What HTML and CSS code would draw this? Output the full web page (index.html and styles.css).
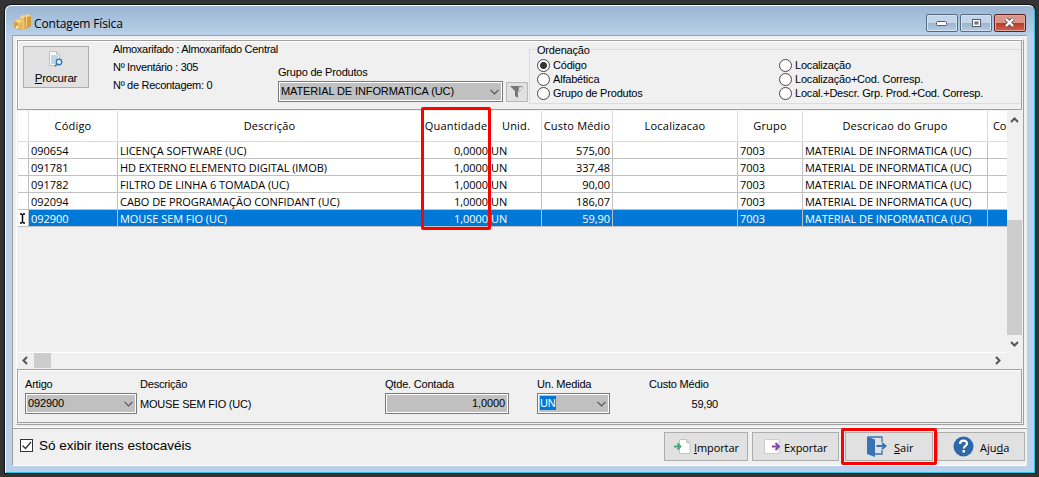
FILE: index.html
```html
<!DOCTYPE html>
<html lang="pt-BR">
<head>
    <meta charset="utf-8">
    <title>Contagem Física</title>
    <link rel="stylesheet" href="styles.css">
</head>
<body>
    <div class="window">
        <!-- title bar -->
        <div class="titlebar">
            <svg class="app-icon" width="17" height="17" viewBox="0 0 17 17">
                <path d="M0 7l4-2 5 2v8l-5 1-4-3z" fill="#d9a23c"/>
                <path d="M5 4l4-3 4 1v12l-5 2-3-2z" fill="#e5b452"/>
                <path d="M10 3l4-3 3 2v10l-5 3z" fill="#d39c3a"/>
                <path d="M0 7l4-2 5 2-4 2zM5 4l4-3 3 1-4 3zM10 2l4-2 3 2-4 1z" fill="#f6d78c"/>
                <path d="M5 8v7M9 5v10M12.500 3v10" stroke="#f3d08a" fill="none"/>
                <path d="M3 12v3M2 13h2" stroke="#fff" fill="none"/>
            </svg>
            <span class="title">Contagem Física</span>
            <div class="controls">
                <div class="control"><svg width="12" height="6"><rect x=".5" y="1.500" width="10" height="4" rx="1" fill="#fff" stroke="#555b6e"/></svg></div>
                <div class="control"><svg width="11" height="10"><rect x="1.500" y="1.500" width="8" height="7" fill="#fff" stroke="#555b6e"/><rect x="4" y="4" width="3" height="2" fill="#8fa9c6" stroke="#555b6e"/></svg></div>
                <div class="control close"><svg width="12" height="10"><path d="M2 1l7 7M9 1L2 8" stroke="#555b6e" stroke-width="4"/><path d="M2 1l7 7M9 1L2 8" stroke="#fff" stroke-width="2.2"/></svg></div>
            </div>
        </div>

        <div class="client">
            <div class="main">
                <!-- search panel -->
                <div class="search-panel">
                    <button class="btn-search">
                        <svg width="16" height="17" viewBox="0 0 16 17">
                            <path d="M1.5.5h7l3 3v11h-10z" fill="#fafafa" stroke="#b9c0c6"/>
                            <path d="M3 4h5v1h2v8H3z" fill="#bcd5ea"/>
                            <path d="M8.5 1v3h3" fill="none" stroke="#b9c0c6"/>
                            <circle cx="11" cy="11" r="2.7" fill="#e8f2fa" stroke="#3b78b8" stroke-width="1.4"/>
                            <path d="M9 13l-2.300 2.300" stroke="#3b78b8" stroke-width="1.600"/>
                        </svg>
                        <span><u>P</u>rocurar</span>
                    </button>
                    <div class="info">
                        <div>Almoxarifado : Almoxarifado Central</div>
                        <div>Nº Inventário : 305</div>
                        <div>Nº de Recontagem: 0</div>
                    </div>
                    <div class="group-field">
                        <label>Grupo de Produtos</label>
                        <div class="combo combo-group"><span>MATERIAL DE INFORMATICA (UC)</span><svg width="9" height="6"><path d="M.5.8l4 4 4-4" fill="none" stroke="#555" stroke-width="1.2"/></svg></div>
                    </div>
                    <div class="filter">
                        <svg width="16" height="15" viewBox="0 0 16 15"><path d="M1 1h12L9 6v7l-3-2V6z" fill="#777"/><path d="M10 2h4l-4 5z" fill="#fff" stroke="#999" stroke-width=".7"/></svg>
                    </div>
                    <div class="order">
                        <div class="legend">Ordenação</div>
                        <div class="radios">
                            <div class="radio checked"><i></i>Código</div>
                            <div class="radio"><i></i>Alfabética</div>
                            <div class="radio"><i></i>Grupo de Produtos</div>
                        </div>
                        <div class="radios">
                            <div class="radio"><i></i>Localização</div>
                            <div class="radio"><i></i>Localização+Cod. Corresp.</div>
                            <div class="radio"><i></i>Local.+Descr. Grp. Prod.+Cod. Corresp.</div>
                        </div>
                    </div>
                </div>

                <!-- items grid -->
                <div class="grid-area">
                    <div class="grid">
                        <div class="row head">
                            <div></div><div>Código</div><div>Descrição</div><div>Quantidade</div><div>Unid.</div><div>Custo Médio</div><div>Localizacao</div><div>Grupo</div><div>Descricao do Grupo</div><div class="cut">Co</div>
                        </div>
                        <div class="row">
                            <div></div><div>090654</div><div>LICENÇA SOFTWARE (UC)</div><div class="num">0,0000</div><div class="unit">UN</div><div class="num">575,00</div><div></div><div>7003</div><div>MATERIAL DE INFORMATICA (UC)</div><div></div>
                        </div>
                        <div class="row">
                            <div></div><div>091781</div><div>HD EXTERNO ELEMENTO DIGITAL (IMOB)</div><div class="num">1,0000</div><div class="unit">UN</div><div class="num">337,48</div><div></div><div>7003</div><div>MATERIAL DE INFORMATICA (UC)</div><div></div>
                        </div>
                        <div class="row">
                            <div></div><div>091782</div><div>FILTRO DE LINHA 6 TOMADA (UC)</div><div class="num">1,0000</div><div class="unit">UN</div><div class="num">90,00</div><div></div><div>7003</div><div>MATERIAL DE INFORMATICA (UC)</div><div></div>
                        </div>
                        <div class="row">
                            <div></div><div>092094</div><div>CABO DE PROGRAMAÇÃO CONFIDANT (UC)</div><div class="num">1,0000</div><div class="unit">UN</div><div class="num">186,07</div><div></div><div>7003</div><div>MATERIAL DE INFORMATICA (UC)</div><div></div>
                        </div>
                        <div class="row selected">
                            <div class="cursor"><svg width="7" height="11"><path d="M1 1h2M4 1h2M3.500 1v9M1 10h2M4 10h2" fill="none" stroke="#000" stroke-width="1.500"/></svg></div><div>092900</div><div>MOUSE SEM FIO (UC)</div><div class="num">1,0000</div><div class="unit">UN</div><div class="num">59,90</div><div></div><div>7003</div><div>MATERIAL DE INFORMATICA (UC)</div><div></div>
                        </div>
                    </div>
                    <div class="vscroll">
                        <svg width="9" height="6"><path d="M1 5l3.500-3.500L8 5" fill="none" stroke="#555" stroke-width="2"/></svg>
                        <div class="vthumb"></div>
                        <svg width="9" height="6"><path d="M1 1l3.500 3.500L8 1" fill="none" stroke="#555" stroke-width="2"/></svg>
                    </div>
                </div>
                <div class="hscroll">
                    <svg width="6" height="9"><path d="M5 1L1.500 4.500 5 8" fill="none" stroke="#555" stroke-width="2"/></svg>
                    <div class="hthumb"></div>
                    <svg width="6" height="9"><path d="M1 1l3.500 3.500L1 8" fill="none" stroke="#555" stroke-width="2"/></svg>
                </div>

                <!-- selected item -->
                <div class="detail">
                    <div class="field artigo">
                        <label>Artigo</label>
                        <div class="combo"><span>092900</span><svg width="9" height="6"><path d="M.5.8l4 4 4-4" fill="none" stroke="#555" stroke-width="1.2"/></svg></div>
                    </div>
                    <div class="field descricao">
                        <label>Descrição</label>
                        <div class="value">MOUSE SEM FIO (UC)</div>
                    </div>
                    <div class="field qtde">
                        <label>Qtde. Contada</label>
                        <div class="combo"><span class="right">1,0000</span></div>
                    </div>
                    <div class="field medida">
                        <label>Un. Medida</label>
                        <div class="combo"><span class="marked">UN</span><svg width="9" height="6"><path d="M.5.8l4 4 4-4" fill="none" stroke="#555" stroke-width="1.2"/></svg></div>
                    </div>
                    <div class="field custo">
                        <label>Custo Médio</label>
                        <div class="value">59,90</div>
                    </div>
                </div>
            </div>

            <!-- bottom bar -->
            <div class="bottom">
                <div class="check"><svg width="11" height="11"><path d="M1.500 5.500l3 3 5.500-6.500" fill="none" stroke="#333" stroke-width="1.300"/></svg></div>
                <span class="check-label">Só exibir itens estocavéis</span>
                <button class="btn importar">
                    <svg width="17" height="15" viewBox="0 0 17 15"><path d="M5.500.5h7l3.500 3.500v10.500H5.500z" fill="#fff" stroke="#c4c4c4"/><path d="M12.500.5V4H16z" fill="#ddd" stroke="#bbb" stroke-width=".7"/><path d="M0 7.500h5M3.500 4.500l3 3-3 3" fill="none" stroke="#47a67c" stroke-width="1.800"/></svg>
                    <span><u>I</u>mportar</span>
                </button>
                <button class="btn exportar">
                    <svg width="17" height="15" viewBox="0 0 17 15"><path d="M.5.5H15v14H.5z" fill="#fff" stroke="#ccc"/><path d="M8 7.500h6M11.500 4l3.500 3.500-3.500 3.500" fill="none" stroke="#8347a8" stroke-width="2"/></svg>
                    <span>Exportar</span>
                </button>
                <button class="btn sair">
                    <svg width="20" height="22" viewBox="0 0 20 22"><path d="M1 1h14v5M15 14v4H8" fill="none" stroke="#3873b3" stroke-width="1.300"/><path d="M0 .5l8 3V21l-8-3z" fill="#3873b3"/><path d="M9.500 10h8M15 7l3.500 3-3.500 3" fill="none" stroke="#3873b3" stroke-width="2"/></svg>
                    <span><u>S</u>air</span>
                </button>
                <button class="btn ajuda">
                    <svg width="21" height="21" viewBox="0 0 21 21"><circle cx="10.500" cy="10.500" r="10" fill="#2f68a8"/><path d="M7 8c0-4.500 7-4.500 7-.5 0 2.500-3.200 2.500-3.200 5" fill="none" stroke="#fff" stroke-width="2.200"/><rect x="9.500" y="14" width="2.500" height="2.500" fill="#fff"/></svg>
                    <span>Aju<u>d</u>a</span>
                </button>
            </div>
        </div>
    </div>

    <!-- highlights -->
    <div class="mark mark-qty"></div>
    <div class="mark mark-sair"></div>
</body>
</html>
```

FILE: styles.css
```css
* {
    box-sizing: border-box;
}

body {
    margin: 0;
    width: 1039px;
    height: 477px;
    padding: 5px 4px 4px 5px;
    background: #333;
    overflow: hidden;
    color: #000;
    font-family: "Liberation Sans", Arial, sans-serif;
    font-size: 11px;
    letter-spacing: -.2px;
    white-space: nowrap;
}

svg {
    display: block;
    flex: none;
}

button {
    font: inherit;
    letter-spacing: inherit;
    padding: 0;
    color: #000;
    border-radius: 0;
}

label {
    display: block;
}

u {
    text-underline-offset: 1px;
}

/* window frame */
.window {
    width: 1030px;
    height: 468px;
    padding: 0 7px 6px 6px;
    border: 1px solid #fff;
    border-right-color: #25c8e6;
    border-bottom-color: #25c8e6;
    border-radius: 6px 6px 0 0;
    background: linear-gradient(#9bb5d2, #b9d1ea 30px);
    box-shadow: 0 0 0 1px #111;
}

.titlebar {
    display: flex;
    height: 29px;
}

.app-icon {
    margin: 8px 3px 0 2px;
}

.title {
    font: 12px/36px "Open Sans", sans-serif;
    letter-spacing: -.15px;
}

.controls {
    display: flex;
    gap: 2px;
    margin: 8px 1px 0 auto;
}

.control {
    width: 32px;
    height: 18px;
    display: flex;
    align-items: center;
    justify-content: center;
    border: 1px solid #596a80;
    border-radius: 2px;
    background: linear-gradient(#c3d5e8 48%, #9ab5d0 50%, #b5cde4);
    box-shadow: inset 0 0 0 1px #d5e3f1;
}

.close {
    border-color: #5a2222;
    background: linear-gradient(#dc9488 48%, #bb3a24 50%, #cf6350);
    box-shadow: inset 0 0 0 1px #e2a79c;
}

.client {
    display: flex;
    flex-direction: column;
    width: 1015px;
    height: 431px;
    background: #f0f0f0;
    border-left: 1px solid #a0a0a0;
    border-top: 1px solid #a0a0a0;
    border-bottom: 1px solid #fff;
}

.main {
    width: 1008px;
    height: 386px;
    margin: 3px 0 0 3px;
    border: 1px solid #fff;
    border-right: 1px solid #a0a0a0;
    border-bottom: 1px solid #a0a0a0;
}

/* search panel */
.search-panel {
    display: flex;
    width: 1005px;
    height: 70px;
    border: 1px solid #a0a0a0;
    box-shadow: inset 1px 1px #fff;
}

.btn-search {
    display: flex;
    flex-direction: column;
    align-items: center;
    width: 66px;
    height: 42px;
    margin: 5px 0 0 5px;
    padding-top: 4px;
    border: 1px solid #adadad;
    background: #e1e1e1;
    font-size: 11.5px;
    line-height: 20px;
}

.info {
    width: 165px;
    margin-left: 24px;
    line-height: 18px;
    margin-top: -1px;
    letter-spacing: -.3px;
}

.group-field {
    width: 225px;
    padding-top: 23px;
}

.group-field label {
    height: 17px;
    line-height: 17px;
}

.combo {
    display: flex;
    align-items: center;
    height: 21px;
    padding: 0 3px 2px 2px;
    border: 1px solid #7a7a7a;
    box-shadow: inset 0 0 0 1px #fff;
    background: #c0c0c0;
    letter-spacing: -.1px;
}

.combo svg {
    margin-left: auto;
    margin-top: 2px;
}

.filter {
    display: flex;
    align-items: center;
    justify-content: center;
    width: 22px;
    height: 20px;
    margin: 41px 0 0 3px;
    border: 1px solid #b9b9b9;
    background: #e1e1e1;
}

.order {
    display: flex;
    position: relative;
    width: 492px;
    height: 55px;
    margin: 8px 0 0 1px;
    border: 1px solid #dcdcdc;
    border-right: 0;
}

.legend {
    position: absolute;
    left: 6px;
    top: -7px;
    padding: 0 1px;
    background: #f0f0f0;
    line-height: 14px;
}

.radios {
    width: 242px;
    padding: 8px 0 0 7px;
}

.radio {
    display: flex;
    align-items: center;
    gap: 3px;
    height: 14px;
}

.radio i {
    width: 13px;
    height: 13px;
    border: 1px solid #444;
    border-radius: 50%;
    background: #fff;
}

.checked i {
    background: radial-gradient(circle, #333 3px, #fff 4px);
}

/* grid */
.grid-area {
    display: flex;
    height: 243px;
    padding: 1px 0 0 1px;
}

.grid {
    width: 989px;
    height: 242px;
    overflow: hidden;
    border-bottom: 1px solid #fff;
    font-family: "Open Sans", sans-serif;
    font-size: 11px;
    letter-spacing: -.05px;
}

.row {
    display: grid;
    grid-template-columns: 11px 89px 304px 69px 51px 71px 125px 65px 185px 19px;
    height: 17px;
    line-height: 17px;
    background: #fff;
}

.row > div {
    padding-left: 2px;
    border-right: 1px solid #c0c0c0;
    border-bottom: 1px solid #c0c0c0;
    overflow: hidden;
}

.row > div:last-child {
    border-right: 0;
}

.head {
    height: 31px;
    line-height: 30px;
    letter-spacing: .2px;
}

.head > div {
    padding-left: 0;
    border-color: #dcdcdc;
    text-align: center;
}

.head > .cut {
    padding-left: 5px;
    text-align: left;
    letter-spacing: -.3px;
}

.row > .num {
    padding-right: 2px;
    text-align: right;
}

.row > .unit {
    padding-left: 0;
}

.selected {
    color: #fff;
    background: #0078d7;
}

.row > .cursor {
    padding: 3px 0 0 1px;
    background: #fff;
}

.vscroll {
    display: flex;
    flex-direction: column;
    align-items: center;
    width: 15px;
    padding: 6px 0 5px;
}

.vthumb {
    width: 15px;
    height: 115px;
    margin: 97px 0 6px;
    background: #cdcdcd;
}

.hscroll {
    display: flex;
    align-items: center;
    height: 16px;
    padding: 0 22px 2px 5px;
}

.hthumb {
    width: 17px;
    height: 15px;
    margin: 0 auto 0 6px;
    background: #cdcdcd;
}

/* selected item */
.detail {
    display: flex;
    width: 1005px;
    height: 54px;
    padding: 5px 0 0 7px;
    border: 1px solid #a0a0a0;
    box-shadow: inset 1px 1px #fff;
}

.field label {
    height: 18px;
    line-height: 18px;
}

.artigo {
    width: 112px;
}

.descricao {
    width: 248px;
    padding-left: 3px;
}

.qtde {
    width: 124px;
}

.medida {
    width: 73px;
    margin-left: 28px;
}

.custo {
    width: 69px;
    margin-left: 39px;
}

.custo .value {
    text-align: right;
}

.value {
    line-height: 22px;
}

.right {
    margin-left: auto;
}

.marked {
    color: #fff;
    background: #0078d7;
    line-height: 14px;
}

/* bottom bar */
.bottom {
    display: flex;
    width: 1014px;
    height: 38px;
    margin-top: 2px;
    padding-left: 7px;
    border-top: 1px solid #fff;
    box-shadow: inset 0 1px #a0a0a0;
}

.check {
    width: 13px;
    height: 13px;
    margin-top: 11px;
    border: 1px solid #333;
    background: #fff;
}

.check-label {
    width: 625px;
    margin-left: 6px;
    font-size: 13.5px;
    line-height: 36px;
    letter-spacing: 0;
}

.btn {
    display: flex;
    align-items: center;
    height: 29px;
    margin-top: 4px;
    border: 1px solid #adadad;
    background: #e1e1e1;
    font-family: "Open Sans", sans-serif;
    font-size: 11px;
    letter-spacing: 0;
}

.btn span {
    padding-top: 1px;
}

.importar {
    width: 84px;
    padding-left: 9px;
    gap: 3px;
    letter-spacing: -.1px;
}

.exportar {
    width: 87px;
    margin-left: 4px;
    padding-left: 11px;
    gap: 3px;
    letter-spacing: -.1px;
}

.sair {
    width: 88px;
    margin-left: 6px;
    padding-left: 21px;
    gap: 7px;
}

.ajuda {
    width: 88px;
    margin-left: 4px;
    padding-left: 15px;
    gap: 6px;
}

/* red highlights over the window */
.mark {
    position: absolute;
    border: 3px solid #f00;
    border-radius: 2px;
}

.mark-qty {
    left: 421px;
    top: 107px;
    width: 70px;
    height: 123px;
}

.mark-sair {
    left: 841px;
    top: 428px;
    width: 96px;
    height: 37px;
}
```
